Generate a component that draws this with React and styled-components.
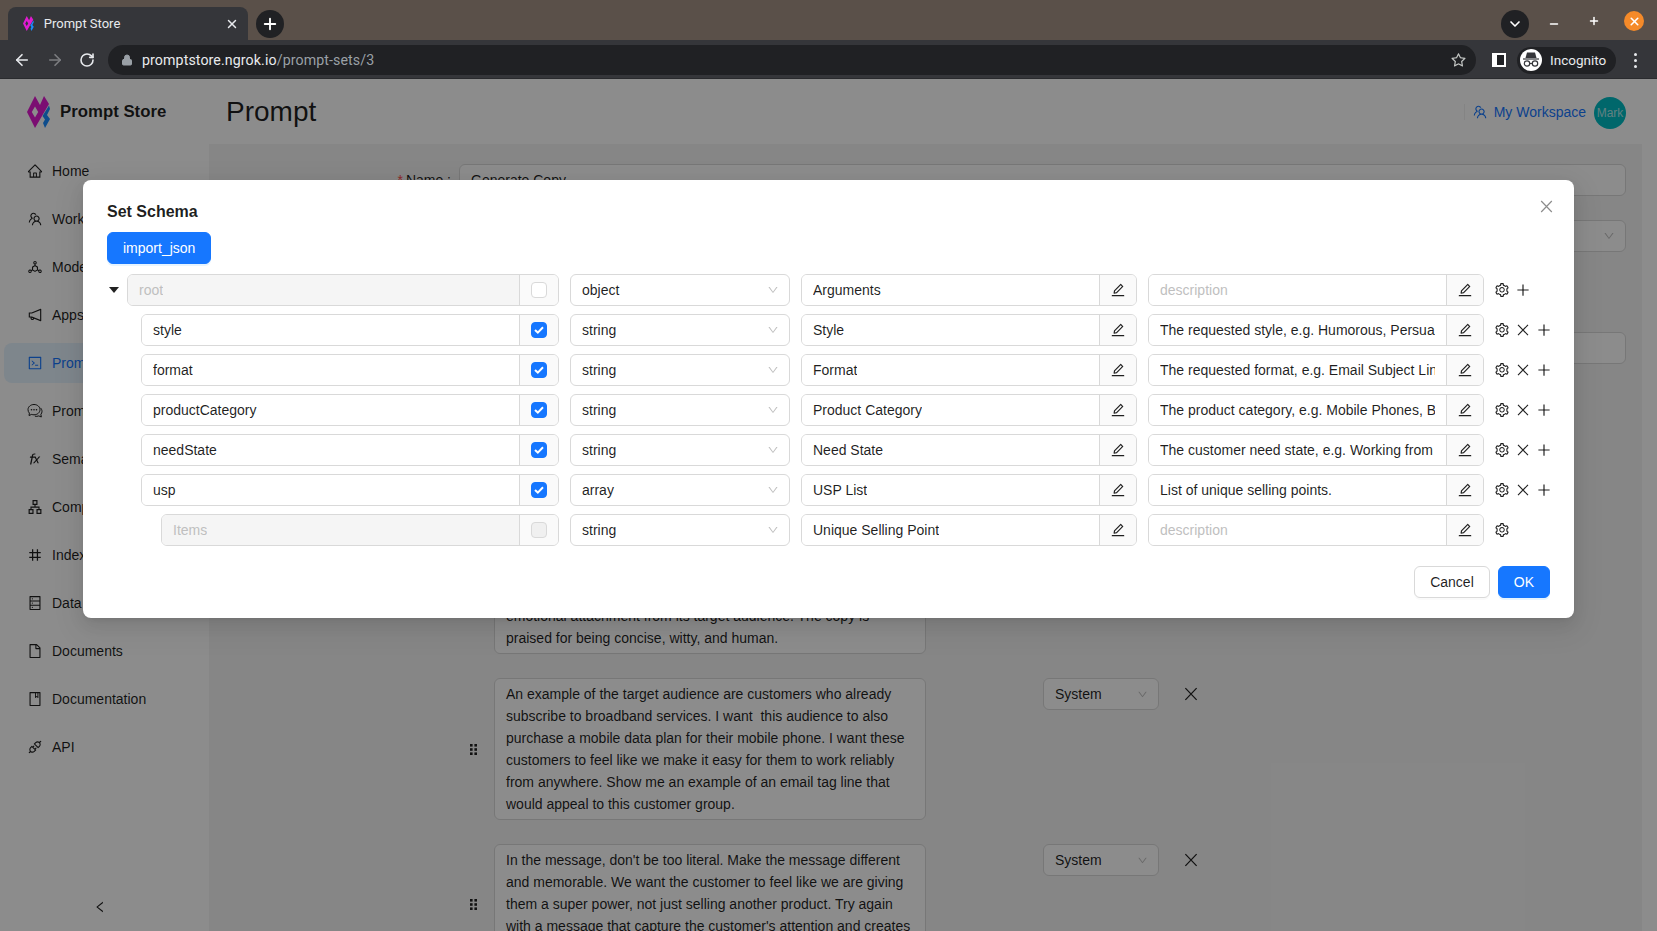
import styled, { createGlobalStyle } from "styled-components";
import {
  AiOutlineApartment,
  AiOutlineApi,
  AiOutlineBook,
  AiOutlineCode,
  AiOutlineDatabase,
  AiOutlineDeploymentUnit,
  AiOutlineDown,
  AiOutlineEdit,
  AiOutlineFile,
  AiOutlineFunction,
  AiOutlineHome,
  AiOutlineLeft,
  AiOutlineNotification,
  AiOutlineNumber,
  AiOutlinePlus,
  AiOutlineSetting,
  AiOutlineStar,
  AiOutlineTeam,
} from "react-icons/ai";
import { ArrowLeft, ArrowRight, ChevronDown, Lock, Minus, Plus, RotateCw, X } from "lucide-react";

const GlobalStyle = createGlobalStyle`
  html, body {
    margin: 0;
    height: 100%;
    overflow: hidden;
    background: #fff;
    font-family: "Liberation Sans", Arial, sans-serif;
    font-size: 14px;
    color: rgba(0, 0, 0, 0.88);
  }
  * {
    box-sizing: border-box;
  }
`;

const Window = styled.div`
  width: 1657px;
  height: 931px;
  display: flex;
  flex-direction: column;
  overflow: hidden;
`;

/* browser chrome */
const TabStrip = styled.div`
  height: 40px;
  flex: none;
  background: #5a5049;
  display: flex;
  align-items: flex-end;
  padding-left: 8px;
`;

const Tab = styled.div`
  width: 240px;
  height: 33px;
  background: #35363a;
  border-radius: 8px 8px 0 0;
  display: flex;
  align-items: center;
  padding: 0 9px 0 15px;
  color: #e8eaed;
  font-family: Roboto, sans-serif;
  font-size: 13px;
`;

const TabTitle = styled.span`
  flex: 1;
  margin-left: 10px;
`;

const RoundButton = styled.div`
  width: 28px;
  height: 28px;
  border-radius: 50%;
  background: #202124;
  color: #fff;
  display: flex;
  align-items: center;
  justify-content: center;
  flex: none;
`;

const NewTab = styled(RoundButton)`
  margin: 0 0 2px 8px;
`;

const StripRight = styled.div`
  margin-left: auto;
  display: flex;
  align-items: flex-start;
  height: 40px;
  padding-right: 13px;
  color: #fff;
`;

const TabSearch = styled(RoundButton)`
  margin: 10px -5px 0 0;
`;

const WindowButton = styled.div`
  width: 20px;
  height: 20px;
  margin: ${(p) => (p.$raised ? "11px" : "14px")} 0 0 20px;
  display: flex;
  align-items: center;
  justify-content: center;
  border-radius: 50%;
  background: ${(p) => (p.$close ? "#f58a29" : "transparent")};
`;

const Toolbar = styled.div`
  height: 39px;
  flex: none;
  background: #35363a;
  border-bottom: 1px solid #2a2b2e;
  display: flex;
  align-items: center;
  padding: 2px 0 0 12px;
  color: #e8eaed;
`;

const NavArrow = styled.div`
  width: 20px;
  margin-right: 12.5px;
  display: flex;
  justify-content: center;
  color: ${(p) => (p.$muted ? "#7c7d80" : "#e8eaed")};
`;

const Omnibox = styled.div`
  width: 1368px;
  height: 30px;
  margin-left: -1.5px;
  background: #202124;
  border-radius: 15px;
  display: flex;
  align-items: center;
  padding: 0 9px 0 13px;
  font-family: Roboto, sans-serif;
  font-size: 14.2px;
`;

const Url = styled.span`
  margin-left: 9px;
  flex: 1;
  color: #9aa0a6;
  letter-spacing: 0.1px;

  b {
    font-weight: 400;
    color: #e8eaed;
  }
`;

const SidePanelIcon = styled.div`
  width: 14px;
  height: 14px;
  margin-left: 16px;
  background: #202124;
  border: 2px solid #fff;
  border-left-width: 5px;
  flex: none;
`;

const IncognitoChip = styled.div`
  width: 99px;
  height: 27px;
  margin-left: 11px;
  border-radius: 14px;
  background: #202124;
  display: flex;
  align-items: center;
  padding-left: 3px;
  font-family: Roboto, sans-serif;
  font-size: 13.5px;
  flex: none;

  span {
    margin-left: 8px;
  }
`;

const IncognitoFace = styled.div`
  width: 22px;
  height: 22px;
  border-radius: 50%;
  background: #fff;
  display: flex;
  align-items: center;
  justify-content: center;
`;

const MenuDots = styled.div`
  margin-left: 18px;
  width: 3px;
  display: flex;
  flex-direction: column;
  gap: 3px;

  i {
    width: 3px;
    height: 3px;
    border-radius: 50%;
    background: #e8eaed;
  }
`;

/* page behind the modal */
const Viewport = styled.div`
  flex: 1;
  min-height: 0;
  position: relative;
  display: flex;
  overflow: hidden;
`;

const Sider = styled.aside`
  width: 209px;
  flex: none;
  display: flex;
  flex-direction: column;
  background: #fff;
`;

const Brand = styled.div`
  height: 72px;
  display: flex;
  align-items: center;
  padding: 0 0 6px 27px;
  font-size: 16.8px;
  font-weight: 700;
  gap: 10px;
`;

const Menu = styled.nav`
  display: flex;
  flex-direction: column;
  gap: 8px;
`;

const MenuItem = styled.div`
  height: 40px;
  margin: 0 8px 0 4px;
  padding-left: 23px;
  border-radius: 8px;
  display: flex;
  align-items: center;
  gap: 9px;
  white-space: nowrap;
  background: ${(p) => (p.$active ? "#e6f4ff" : "transparent")};
  color: ${(p) => (p.$active ? "#1677ff" : "inherit")};
`;

const Collapse = styled.div`
  margin-top: auto;
  height: 48px;
  display: flex;
  align-items: center;
  justify-content: center;
  padding-right: 9px;
`;

const Main = styled.main`
  flex: 1;
  min-width: 0;
  display: flex;
  flex-direction: column;
`;

const Header = styled.header`
  height: 65px;
  flex: none;
  display: flex;
  align-items: center;
  padding: 0 31px 0 17px;
`;

const PageTitle = styled.h1`
  margin: 0;
  font-size: 28px;
  font-weight: 400;
`;

const WorkspaceLink = styled.div`
  margin-left: auto;
  padding-left: 7px;
  display: flex;
  align-items: center;
  gap: 6px;
  color: #1677ff;
  font-size: 14px;
  border-left: 1px solid #f0f0f0;
`;

const UserAvatar = styled.div`
  width: 32px;
  height: 32px;
  margin: 3px 0 0 8px;
  border-radius: 50%;
  background: #00bcc4;
  color: rgba(255, 255, 255, 0.7);
  font-size: 12px;
  display: flex;
  align-items: center;
  justify-content: center;
`;

const Content = styled.div`
  flex: 1;
  min-height: 0;
  margin-right: 15px;
  padding: 20px 16px 0 0;
  background: #f5f5f5;
`;

const FormRow = styled.div`
  display: flex;
  align-items: center;
  margin-top: ${(p) => p.$top || 0}px;
`;

const FormLabel = styled.label`
  width: 242px;
  text-align: right;

  em {
    color: #ff4d4f;
    font-style: normal;
    margin-right: 3px;
  }
`;

const FormInput = styled.div`
  flex: 1;
  height: 32px;
  margin-left: 8px;
  padding: 0 10px 0 11px;
  display: flex;
  align-items: center;
  justify-content: space-between;
  background: #fff;
  border: 1px solid #d9d9d9;
  border-radius: 6px;
  color: #bfbfbf;

  span {
    color: rgba(0, 0, 0, 0.88);
  }
`;

const Messages = styled.div`
  margin: 192px 0 0 259px;
  display: flex;
  flex-direction: column;
  gap: 24px;
`;

const MessageRow = styled.div`
  display: flex;
  align-items: flex-start;
`;

const DragHandle = styled.div`
  width: 10px;
  margin-right: 16px;
  align-self: center;
  display: flex;
  justify-content: center;
`;

const MessageText = styled.div`
  width: 432px;
  padding: 4px 11px;
  background: #fff;
  border: 1px solid #d9d9d9;
  border-radius: 6px;
  line-height: 22px;
  white-space: pre-wrap;
`;

const RoleSelect = styled.div`
  width: 116px;
  height: 32px;
  margin-left: 117px;
  padding: 0 10px 0 11px;
  display: flex;
  align-items: center;
  justify-content: space-between;
  background: #fff;
  border: 1px solid #d9d9d9;
  border-radius: 6px;
  color: rgba(0, 0, 0, 0.88);

  svg {
    color: #bfbfbf;
  }
`;

const RemoveMessage = styled.div`
  margin-left: 23px;
  height: 32px;
  display: flex;
  align-items: center;
`;

/* modal */
const Overlay = styled.div`
  position: absolute;
  inset: 0;
  background: rgba(0, 0, 0, 0.45);
  display: flex;
  justify-content: center;
  align-items: flex-start;
  padding-top: 101px;
`;

const Modal = styled.div`
  position: relative;
  width: 1491px;
  height: 438px;
  padding: 20px 24px;
  background: #fff;
  border-radius: 8px;
  box-shadow: 0 6px 16px rgba(0, 0, 0, 0.08), 0 3px 6px -4px rgba(0, 0, 0, 0.12),
    0 9px 28px 8px rgba(0, 0, 0, 0.05);
`;

const ModalTitle = styled.div`
  font-size: 16px;
  font-weight: 700;
  line-height: 24px;
  margin-bottom: 8px;
`;

const ModalClose = styled.div`
  position: absolute;
  top: 18px;
  right: 19px;
  color: #8c8c8c;
  display: flex;
`;

const PrimaryButton = styled.button`
  height: 32px;
  padding: 0 15px;
  font: inherit;
  color: #fff;
  background: #1677ff;
  border: 1px solid #1677ff;
  border-radius: 6px;
  box-shadow: 0 2px 0 rgba(5, 145, 255, 0.1);
`;

const DefaultButton = styled.button`
  height: 32px;
  padding: 0 15px;
  font: inherit;
  color: rgba(0, 0, 0, 0.88);
  background: #fff;
  border: 1px solid #d9d9d9;
  border-radius: 6px;
  box-shadow: 0 2px 0 rgba(0, 0, 0, 0.02);
`;

const SchemaRows = styled.div`
  margin-top: 10px;
  display: flex;
  flex-direction: column;
  gap: 8px;
`;

const SchemaRow = styled.div`
  display: flex;
  gap: 11px;
  height: 32px;
`;

const NameCell = styled.div`
  width: 452px;
  flex: none;
  display: flex;
  align-items: center;
  padding-left: ${(p) => p.$indent}px;
`;

const Caret = styled.button`
  width: 0;
  height: 0;
  padding: 0;
  margin: 0 8px 0 2px;
  background: none;
  border-style: solid;
  border-width: 6px 5px 0;
  border-color: #222 transparent transparent;
`;

const Group = styled.div`
  display: flex;
  height: 32px;
  flex: ${(p) => (p.$wide ? "none" : 1)};
  width: ${(p) => (p.$wide ? "336px" : "auto")};
  min-width: 0;
  border: 1px solid #d9d9d9;
  border-radius: 6px;
  overflow: hidden;
`;

const Field = styled.div`
  flex: 1;
  min-width: 0;
  padding: 0 11px;
  display: flex;
  align-items: center;
  background: ${(p) => (p.$disabled ? "#f5f5f5" : "#fff")};
  color: ${(p) => (p.$muted ? "#bfbfbf" : "rgba(0, 0, 0, 0.88)")};

  span {
    display: block;
    overflow: hidden;
    white-space: nowrap;
  }
`;

const Addon = styled.div`
  width: ${(p) => p.$width}px;
  flex: none;
  display: flex;
  align-items: center;
  justify-content: center;
  background: #fafafa;
  border-left: 1px solid #d9d9d9;
`;

const Checkbox = styled.div`
  width: 16px;
  height: 16px;
  border-radius: 4px;
  display: flex;
  align-items: center;
  justify-content: center;
  border: 1px solid ${(p) => (p.$checked ? "#1677ff" : "#d9d9d9")};
  background: ${(p) => (p.$checked ? "#1677ff" : p.$disabled ? "#f0f0f0" : "#fff")};
`;

const TypeSelect = styled.div`
  width: 220px;
  flex: none;
  padding: 0 10px 0 11px;
  display: flex;
  align-items: center;
  justify-content: space-between;
  border: 1px solid #d9d9d9;
  border-radius: 6px;

  svg {
    color: #bfbfbf;
  }
`;

const Actions = styled.div`
  display: flex;
  align-items: center;
  gap: 5px;
  margin-left: -1px;
  color: rgba(0, 0, 0, 0.88);
`;

const Footer = styled.div`
  display: flex;
  justify-content: flex-end;
  gap: 8px;
  margin-top: 20px;
`;

function Logo({ height }) {
  return (
    <svg width={(height * 23) / 32} height={height} viewBox="0 0 23 32">
      <path
        fill="#e01bd0"
        fillRule="evenodd"
        d="M8 0L13 9L17 0L22 8L8 32L0 16ZM8 10.5L4.8 16L8 21.5L11.2 16Z"
      />
      <path fill="#1a8cff" d="M22 9.5L23 13L20 19L23 23L18 32L16 27L18 23.5L15.5 20Z" />
    </svg>
  );
}

function Incognito() {
  return (
    <svg width="18" height="16" viewBox="0 0 18 16">
      <path fill="#35363a" d="M5 0.5H13L14.5 6H3.5Z" />
      <path stroke="#35363a" strokeWidth="1.2" d="M1 7H17" />
      <g fill="none" stroke="#35363a" strokeWidth="1.2">
        <circle cx="5" cy="11.5" r="2.7" />
        <circle cx="13" cy="11.5" r="2.7" />
        <path d="M7.7 11.5H10.3" />
      </g>
    </svg>
  );
}

function Dots() {
  return (
    <svg width="7" height="11" viewBox="0 0 7 11" fill="#222">
      {[0, 4.2, 8.4].map((y) => (
        <g key={y}>
          <rect x="0" y={y} width="2.6" height="2.6" />
          <rect x="4.4" y={y} width="2.6" height="2.6" />
        </g>
      ))}
    </svg>
  );
}

// thin cross, the package ones came out too heavy next to the reference
function ThinX({ size }) {
  return (
    <svg width={size} height={size} viewBox="0 0 16 16" fill="none" stroke="currentColor" strokeWidth="1.1">
      <path d="M3 2.8L13 13.2M13 2.8L3 13.2" />
    </svg>
  );
}

// two overlapping speech bubbles, the icon next to the second prompt item
function BubblesIcon({ size }) {
  return (
    <svg width={size} height={size} viewBox="0 0 16 16" fill="none" stroke="currentColor" strokeWidth="1">
      <path d="M7 1.5C3.6 1.5 1 3.8 1 6.7C1 8 1.5 9.2 2.4 10.1L2 12.5L4.7 11.4C5.4 11.7 6.2 11.8 7 11.8C10.4 11.8 13 9.5 13 6.7C13 3.8 10.4 1.5 7 1.5Z" />
      <path d="M13.4 4.8C14.4 5.8 15 7 15 8.4C15 9.5 14.6 10.5 13.9 11.3L14.3 14L11.8 12.9C10.6 13.4 9.2 13.5 7.9 13.2" />
      <g fill="currentColor" stroke="none">
        <circle cx="4.5" cy="6.7" r="0.8" />
        <circle cx="7" cy="6.7" r="0.8" />
        <circle cx="9.5" cy="6.7" r="0.8" />
      </g>
    </svg>
  );
}

const menu = [
  { icon: AiOutlineHome, label: "Home" },
  { icon: AiOutlineTeam, label: "Workspaces" },
  { icon: AiOutlineDeploymentUnit, label: "Models" },
  { icon: AiOutlineNotification, label: "Apps" },
  { icon: AiOutlineCode, label: "Prompts", active: true },
  { icon: BubblesIcon, label: "Prompt Templates" },
  { icon: AiOutlineFunction, label: "Semantic Functions" },
  { icon: AiOutlineApartment, label: "Compositions" },
  { icon: AiOutlineNumber, label: "Indexes" },
  { icon: AiOutlineDatabase, label: "Data Sources" },
  { icon: AiOutlineFile, label: "Documents" },
  { icon: AiOutlineBook, label: "Documentation" },
  { icon: AiOutlineApi, label: "API" },
];

const messages = [
  "\n\nemotional attachment from its target audience. The copy is praised for being concise, witty, and human.",
  "An example of the target audience are customers who already subscribe to broadband services. I want  this audience to also purchase a mobile data plan for their mobile phone. I want these customers to feel like we make it easy for them to work reliably from anywhere. Show me an example of an email tag line that would appeal to this customer group.",
  "In the message, don't be too literal. Make the message different and memorable. We want the customer to feel like we are giving them a super power, not just selling another product. Try again with a message that capture the customer's attention and creates\n\u00a0",
];

const schema = [
  { name: "root", type: "object", title: "Arguments", indent: 0, root: true },
  { name: "style", type: "string", title: "Style", desc: "The requested style, e.g. Humorous, Persuasive", indent: 34 },
  { name: "format", type: "string", title: "Format", desc: "The requested format, e.g. Email Subject Line", indent: 34 },
  { name: "productCategory", type: "string", title: "Product Category", desc: "The product category, e.g. Mobile Phones, Broadband", indent: 34 },
  { name: "needState", type: "string", title: "Need State", desc: "The customer need state, e.g. Working from home", indent: 34 },
  { name: "usp", type: "array", title: "USP List", desc: "List of unique selling points.", indent: 34 },
  { name: "Items", type: "string", title: "Unique Selling Point", indent: 54, items: true },
];

function Row({ row }) {
  const locked = row.root || row.items;
  return (
    <SchemaRow>
      <NameCell $indent={row.indent}>
        {row.root && <Caret aria-label="collapse" />}
        <Group>
          <Field $disabled={locked} $muted={locked}>
            <span>{row.name}</span>
          </Field>
          <Addon $width={39}>
            <Checkbox $checked={!locked} $disabled={row.items}>
              {!locked && (
                <svg width="10" height="8" viewBox="0 0 10 8">
                  <path d="M1 4L3.8 6.6L9 1.2" fill="none" stroke="#fff" strokeWidth="2" />
                </svg>
              )}
            </Checkbox>
          </Addon>
        </Group>
      </NameCell>
      <TypeSelect>
        {row.type}
        <AiOutlineDown size={12} />
      </TypeSelect>
      <Group $wide>
        <Field>
          <span>{row.title}</span>
        </Field>
        <Addon $width={37}>
          <AiOutlineEdit size={16} />
        </Addon>
      </Group>
      <Group $wide>
        <Field $muted={!row.desc}>
          <span>{row.desc || "description"}</span>
        </Field>
        <Addon $width={37}>
          <AiOutlineEdit size={16} />
        </Addon>
      </Group>
      <Actions>
        <AiOutlineSetting size={16} />
        {!locked && <ThinX size={16} />}
        {!row.items && <AiOutlinePlus size={16} />}
      </Actions>
    </SchemaRow>
  );
}

export default function App() {
  return (
    <Window>
      <GlobalStyle />
      <TabStrip>
        <Tab>
          <Logo height={15} />
          <TabTitle>Prompt Store</TabTitle>
          <X size={14} strokeWidth={2.5} />
        </Tab>
        <NewTab>
          <Plus size={18} strokeWidth={2.5} />
        </NewTab>
        <StripRight>
          <TabSearch>
            <ChevronDown size={16} strokeWidth={2.5} />
          </TabSearch>
          <WindowButton>
            <Minus size={12} strokeWidth={3} />
          </WindowButton>
          <WindowButton $raised>
            <Plus size={12} strokeWidth={3} />
          </WindowButton>
          <WindowButton $close $raised>
            <X size={13} strokeWidth={3} />
          </WindowButton>
        </StripRight>
      </TabStrip>
      <Toolbar>
        <NavArrow>
          <ArrowLeft size={18} strokeWidth={2.2} />
        </NavArrow>
        <NavArrow $muted>
          <ArrowRight size={18} strokeWidth={2.2} />
        </NavArrow>
        <NavArrow>
          <RotateCw size={16} strokeWidth={2.4} />
        </NavArrow>
        <Omnibox>
          <Lock size={12} fill="#9aa0a6" color="#9aa0a6" />
          <Url>
            <b>promptstore.ngrok.io</b>/prompt-sets/3
          </Url>
          <AiOutlineStar size={17} color="#c4c7c5" />
        </Omnibox>
        <SidePanelIcon />
        <IncognitoChip>
          <IncognitoFace>
            <Incognito />
          </IncognitoFace>
          <span>Incognito</span>
        </IncognitoChip>
        <MenuDots>
          <i />
          <i />
          <i />
        </MenuDots>
      </Toolbar>
      <Viewport>
        <Sider>
          <Brand>
            <Logo height={32} />
            Prompt Store
          </Brand>
          <Menu>
            {menu.map(({ icon: Icon, label, active }) => (
              <MenuItem key={label} $active={active}>
                <Icon size={16} />
                {label}
              </MenuItem>
            ))}
          </Menu>
          <Collapse>
            <AiOutlineLeft size={14} />
          </Collapse>
        </Sider>
        <Main>
          <Header>
            <PageTitle>Prompt</PageTitle>
            <WorkspaceLink>
              <AiOutlineTeam size={16} />
              My Workspace
            </WorkspaceLink>
            <UserAvatar>Mark</UserAvatar>
          </Header>
          <Content>
            <FormRow>
              <FormLabel>
                <em>*</em>Name :
              </FormLabel>
              <FormInput>
                <span>Generate Copy</span>
              </FormInput>
            </FormRow>
            <FormRow $top={24}>
              <FormLabel />
              <FormInput>
                <span />
                <AiOutlineDown size={12} />
              </FormInput>
            </FormRow>
            <FormRow $top={80}>
              <FormLabel />
              <FormInput />
            </FormRow>
            <Messages>
              {messages.map((text, i) => (
                <MessageRow key={i}>
                  <DragHandle>
                    <Dots />
                  </DragHandle>
                  <MessageText>{text}</MessageText>
                  {i > 0 && (
                    <>
                      <RoleSelect>
                        System
                        <AiOutlineDown size={11} />
                      </RoleSelect>
                      <RemoveMessage>
                        <ThinX size={18} />
                      </RemoveMessage>
                    </>
                  )}
                </MessageRow>
              ))}
            </Messages>
          </Content>
        </Main>
        <Overlay>
          <Modal>
            <ModalTitle>Set Schema</ModalTitle>
            <ModalClose>
              <ThinX size={17} />
            </ModalClose>
            <PrimaryButton>import_json</PrimaryButton>
            <SchemaRows>
              {schema.map((row) => (
                <Row key={row.name} row={row} />
              ))}
            </SchemaRows>
            <Footer>
              <DefaultButton>Cancel</DefaultButton>
              <PrimaryButton>OK</PrimaryButton>
            </Footer>
          </Modal>
        </Overlay>
      </Viewport>
    </Window>
  );
}
